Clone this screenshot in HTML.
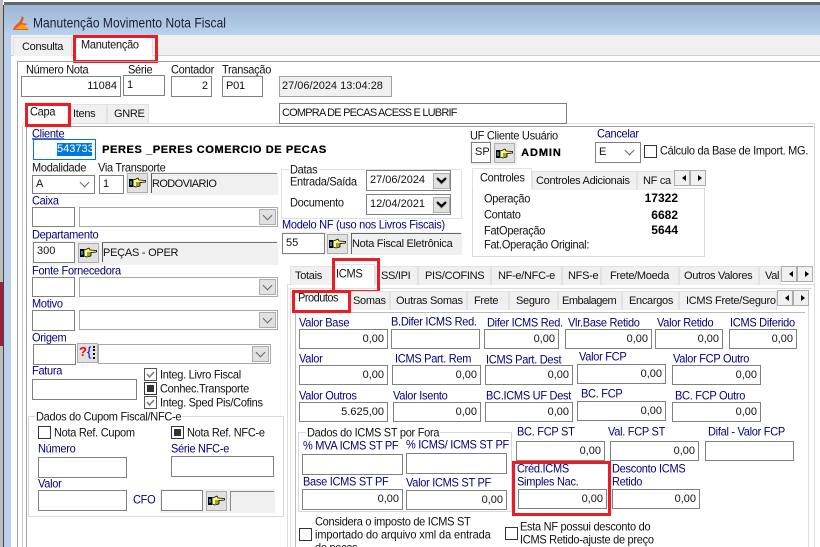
<!DOCTYPE html>
<html><head><meta charset="utf-8"><style>
html,body{margin:0;padding:0;background:#fff}
#p{position:relative;width:820px;height:547px;overflow:hidden;background:#fff;font:11px/13px "Liberation Sans",sans-serif;color:#111}
#p div,#p svg{position:absolute;box-sizing:border-box}
.l{white-space:nowrap;color:#000080;height:13px;letter-spacing:-.28px;transform:scaleY(1.12)}
.t{white-space:nowrap;color:#111;height:13px;letter-spacing:-.28px;transform:scaleY(1.12)}
.w{white-space:nowrap;font-weight:bold;color:#000;height:13px;letter-spacing:.6px;font-size:11px}
.b{border:1px solid #808080;background:#fff;white-space:nowrap;padding:0 3px;line-height:18px;height:21px;color:#111}
.v{text-align:right;line-height:19px;height:20px;border-color:#808080}
.g{background:#f0f0f0}
.c{border:1px solid #a8a8a8;background:#fff;width:199px;height:20px}
.a{background:#e1e1e1;border:1px solid #adadad;width:17px;height:16px}
.a::after{content:"";position:absolute;left:4px;top:2px;width:6px;height:6px;border:solid #666;border-width:0 1px 1px 0;transform:rotate(45deg)}
.tb{background:#f0f0f0;border:1px solid #e2e2e2;border-bottom:0;white-space:nowrap;overflow:hidden;color:#111;height:19px;letter-spacing:-.3px}
.n{background:#f0f0f0;border:1px solid #adadad;width:16px;height:16px}
.nl::after,.nr::after{content:"";position:absolute;top:4px;border:3px solid transparent;border-width:3px 4px}
.nl::after{left:3px;border-right-color:#000}
.nr::after{left:7px;border-left-color:#000}
.h{background:#e1e1e1;border:1px solid #adadad;width:21px;height:20px}
.k{width:13px;height:13px;border:1px solid #333;background:#fff}
.r{border:3px solid #ed1c24}
.x{background:#ccc}
</style></head><body><div id="p">
<svg width="0" height="0" style="left:0;top:0"><defs><symbol id="hand" viewBox="0 0 17 11"><rect x="0" y="2" width="4" height="8" fill="#000"/><rect x="1" y="4" width="2" height="4" fill="#0090b0"/><path d="M4 3 L7 2 L9 1 L10 3 L16.500 3.500 L16.500 5 L11 5.500 L11 9 L7 10 L4 9 Z" fill="#ffff70" stroke="#000" stroke-width=".8"/><path d="M7 6 H11 M7 8 H10.500" stroke="#000" stroke-width=".8"/></symbol></defs></svg>

<!-- window frame -->
<div style="left:0;top:0;width:3px;height:547px;background:#bdbdbd"></div>
<div style="left:0;top:282px;width:3px;height:64px;background:#9e1f3d"></div>
<div style="left:3px;top:5px;width:1px;height:542px;background:#444"></div>
<div style="left:4px;top:2px;width:816px;height:3px;background:#666"></div>
<div style="left:4px;top:5px;width:816px;height:30px;background:linear-gradient(#9bb6d5,#b9d1ea)"></div>
<div style="left:4px;top:35px;width:7px;height:512px;background:#b9d1ea"></div>
<svg style="left:13px;top:15px" width="17" height="16" viewBox="0 0 17 16"><path d="M9 1 L7 6 L1 12 L0 15 L16 15 L10 11 L15 9 L9 8 L11 3 Z" fill="#ea5a1f"/><path d="M2 14 L9 9 L16 14 Z" fill="#f7a21d"/></svg>
<div class="t" style="left:33px;top:17px;font-size:12px;color:#1c1c33;letter-spacing:.05px">Manutenção Movimento Nota Fiscal</div>

<!-- main tabs -->
<div style="left:11px;top:35px;width:809px;height:21px;background:#f0f0f0"></div>
<div class="x" style="left:11px;top:55px;width:809px;height:1px"></div>
<div class="tb" style="left:13px;top:37px;width:59px;padding:3px 8px">Consulta</div>
<div style="left:73px;top:35px;width:80px;height:22px;background:#fff;border:1px solid #e2e2e2;border-bottom:0"></div>
<div class="t" style="left:81px;top:39px">Manutenção</div>
<div class="r" style="left:73px;top:35px;width:85px;height:28px"></div>

<div style="left:17px;top:61px;width:803px;height:1px;background:#a0a0a0"></div>
<div style="left:17px;top:61px;width:1px;height:486px;background:#a0a0a0"></div>

<div class="t" style="left:26px;top:64px">Número Nota</div>
<div class="t" style="left:128px;top:64px">Série</div>
<div class="t" style="left:171px;top:64px">Contador</div>
<div class="t" style="left:222px;top:64px">Transação</div>
<div class="b v" style="left:21px;top:76px;width:100px;height:21px">11084</div>
<div class="b" style="left:123px;top:75px;width:42px;height:21px">1</div>
<div class="b v" style="left:171px;top:76px;width:41px;height:21px">2</div>
<div class="b" style="left:222px;top:76px;width:41px;height:21px;line-height:19px;letter-spacing:-.2px">P01</div>
<div class="b g" style="left:279px;top:76px;width:113px;height:21px;border-color:#a0a0a0;line-height:19px;padding:0 2px">27/06/2024 13:04:28</div>

<!-- capa tabs -->
<div class="x" style="left:22px;top:126px;width:1px;height:421px"></div>
<div style="left:26px;top:126px;width:1px;height:421px;background:#a0a0a0"></div>
<div style="left:27px;top:126px;width:786px;height:1px;background:#a0a0a0"></div>
<div style="left:22px;top:123px;width:792px;height:1px;background:#ddd"></div>
<div style="left:814px;top:123px;width:1px;height:424px;background:#ddd"></div>
<div style="left:26px;top:102px;width:42px;height:24px;background:#fff;border:1px solid #e2e2e2;border-bottom:0"></div>
<div class="t" style="left:30px;top:106px">Capa</div>
<div class="tb" style="left:68px;top:104px;width:39px;padding:3px 4px">Itens</div>
<div class="tb" style="left:107px;top:104px;width:42px;padding:3px 6px">GNRE</div>
<div class="r" style="left:25px;top:103px;width:46px;height:24px"></div>
<div class="b" style="left:279px;top:103px;width:288px;height:21px;line-height:19px;padding:0 2px;letter-spacing:-.8px">COMPRA DE PECAS ACESS E LUBRIF</div>

<!-- left column -->
<div class="l" style="left:32px;top:128px;text-decoration:underline">Cliente</div>
<div class="b" style="left:33px;top:139px;width:63px;height:21px;border-color:#0078d7"></div>
<div style="left:57px;top:143px;width:35px;height:13px;background:#0078d7;color:#fff;line-height:13px;overflow:hidden">543733</div>
<div class="w" style="left:102px;top:144px;text-shadow:.3px 0 0 #000">PERES _PERES COMERCIO DE PECAS</div>

<div class="t" style="left:32px;top:162px">Modalidade</div>
<div class="t" style="left:98px;top:162px">Via Transporte</div>
<div class="b" style="left:32px;top:175px;width:63px;height:19px;line-height:17px">A</div>
<div class="a" style="left:77px;top:177px;border:0;background:none"></div>
<div class="b" style="left:99px;top:175px;width:25px;height:19px;line-height:17px">1</div>
<div style="left:126px;top:172px;width:152px;height:23px;background:#f0f0f0"></div>
<div class="h" style="left:127px;top:173px"></div><svg style="left:129px;top:177px" width="17" height="11"><use href="#hand"/></svg>
<div style="left:151px;top:173px;width:126px;height:20px;background:#f0f0f0;border-left:1px solid #555;border-top:1px solid #888;line-height:20px;letter-spacing:-.6px">RODOVIARIO</div>

<div class="l" style="left:32px;top:195px">Caixa</div>
<div class="b" style="left:32px;top:207px;width:43px;height:20px"></div>
<div class="c" style="left:79px;top:207px"></div><div class="a" style="left:259px;top:209px"></div>

<div class="l" style="left:32px;top:229px">Departamento</div>
<div style="left:32px;top:241px;width:246px;height:24px;background:#f0f0f0"></div>
<div class="b" style="left:33px;top:242px;width:42px;height:21px;line-height:17px">300</div>
<div class="h" style="left:78px;top:243px"></div><svg style="left:80px;top:247px" width="17" height="11"><use href="#hand"/></svg>
<div style="left:102px;top:242px;width:175px;height:20px;background:#f0f0f0;border-left:1px solid #555;border-top:1px solid #777;line-height:20px;letter-spacing:-.25px">PEÇAS - OPER</div>

<div class="l" style="left:32px;top:265px">Fonte Fornecedora</div>
<div class="b" style="left:32px;top:277px;width:43px;height:20px"></div>
<div class="c" style="left:79px;top:277px"></div><div class="a" style="left:259px;top:279px"></div>

<div class="l" style="left:32px;top:298px">Motivo</div>
<div class="b" style="left:32px;top:310px;width:43px;height:21px"></div>
<div class="c" style="left:79px;top:310px"></div><div class="a" style="left:259px;top:312px"></div>

<div class="l" style="left:32px;top:332px">Origem</div>
<div class="b" style="left:33px;top:344px;width:43px;height:21px"></div>
<div class="h" style="left:77px;top:343px"></div>
<div style="left:79px;top:345px;width:8px;height:13px;color:#f00;font-weight:bold;font-size:13px">?</div>
<div style="left:87px;top:345px;width:6px;height:13px;color:#00c;font-size:13px">{</div>
<div style="left:93px;top:346px;width:2px;height:13px;border-left:2px dotted #000"></div>
<div class="c" style="left:98px;top:344px;width:173px"></div><div class="a" style="left:252px;top:346px"></div>

<div class="l" style="left:32px;top:365px">Fatura</div>
<div class="b" style="left:32px;top:379px;width:105px;height:21px"></div>
<div class="k" style="left:144px;top:368px;border-color:#555"></div><svg style="left:145px;top:369px" width="11" height="11"><path d="M2 5 L4.500 8 L9 3" fill="none" stroke="#777" stroke-width="1.500"/></svg>
<div class="t" style="left:160px;top:369px">Integ. Livro Fiscal</div>
<div class="k" style="left:144px;top:382px"></div><div style="left:147px;top:385px;width:7px;height:7px;background:#333"></div>
<div class="t" style="left:160px;top:383px">Conhec.Transporte</div>
<div class="k" style="left:144px;top:396px;border-color:#555"></div><svg style="left:145px;top:397px" width="11" height="11"><path d="M2 5 L4.500 8 L9 3" fill="none" stroke="#777" stroke-width="1.500"/></svg>
<div class="t" style="left:160px;top:397px">Integ. Sped Pis/Cofins</div>

<div style="left:28px;top:416px;width:256px;height:101px;border:1px solid #d9d9d9"></div>
<div class="t" style="left:35px;top:411px;background:#fff;padding:0 1px">Dados do Cupom Fiscal/NFC-e</div>
<div class="k" style="left:38px;top:426px"></div>
<div class="t" style="left:54px;top:427px">Nota Ref. Cupom</div>
<div class="k" style="left:171px;top:426px"></div><div style="left:174px;top:429px;width:7px;height:7px;background:#333"></div>
<div class="t" style="left:187px;top:427px">Nota Ref. NFC-e</div>
<div class="l" style="left:38px;top:443px">Número</div>
<div class="l" style="left:171px;top:443px">Série NFC-e</div>
<div class="b" style="left:38px;top:457px;width:89px;height:21px"></div>
<div class="b" style="left:171px;top:456px;width:103px;height:21px"></div>
<div class="l" style="left:38px;top:478px">Valor</div>
<div class="b" style="left:38px;top:490px;width:89px;height:21px"></div>
<div class="l" style="left:133px;top:494px">CFO</div>
<div style="left:160px;top:489px;width:115px;height:24px;background:#f0f0f0"></div>
<div class="b" style="left:161px;top:490px;width:42px;height:21px"></div>
<div class="h" style="left:206px;top:491px"></div><svg style="left:208px;top:495px" width="17" height="11"><use href="#hand"/></svg>
<div style="left:230px;top:491px;width:44px;height:20px;background:#f0f0f0;border-left:1px solid #888;border-top:1px solid #888"></div>

<!-- datas -->
<div style="left:281px;top:169px;width:181px;height:50px;border:1px solid #e0e0e0"></div>
<div class="t" style="left:289px;top:164px;background:#fff;padding:0 1px">Datas</div>
<div class="t" style="left:290px;top:176px">Entrada/Saída</div>
<div class="t" style="left:290px;top:197px">Documento</div>
<div class="b" style="left:366px;top:170px;width:85px;height:21px;line-height:19px">27/06/2024</div>
<div class="b" style="left:366px;top:194px;width:85px;height:21px;line-height:19px">12/04/2021</div>
<div class="a" style="left:433px;top:173px;height:16px"></div>
<div class="a" style="left:433px;top:197px;height:16px"></div>
<svg style="left:436px;top:177px" width="11" height="8" style="background:#e1e1e1"><path d="M1 1 L5.500 5 L10 1" fill="none" stroke="#000" stroke-width="2"/></svg>
<svg style="left:436px;top:201px" width="11" height="8"><path d="M1 1 L5.500 5 L10 1" fill="none" stroke="#000" stroke-width="2"/></svg>

<div class="l" style="left:282px;top:219px;color:#00008b">Modelo NF (uso nos Livros Fiscais)</div>
<div style="left:282px;top:232px;width:180px;height:23px;background:#f0f0f0"></div>
<div class="b" style="left:282px;top:233px;width:43px;height:21px;line-height:18px">55</div>
<div class="h" style="left:327px;top:234px"></div><svg style="left:329px;top:238px" width="17" height="11"><use href="#hand"/></svg>
<div style="left:351px;top:233px;width:110px;height:21px;background:#f0f0f0;border-left:1px solid #666;border-top:1px solid #666;line-height:21px;white-space:nowrap;letter-spacing:-.3px">Nota Fiscal Eletrônica</div>

<!-- UF -->
<div class="t" style="left:470px;top:130px">UF Cliente Usuário</div>
<div style="left:470px;top:141px;width:47px;height:24px;background:#f0f0f0"></div>
<div class="b" style="left:471px;top:142px;width:20px;height:21px;padding:0 3px;line-height:19px">SP</div>
<div class="h" style="left:494px;top:143px"></div><svg style="left:496px;top:148px" width="17" height="11"><use href="#hand"/></svg>
<div class="w" style="left:521px;top:147px;letter-spacing:.9px;text-shadow:.3px 0 0 #000">ADMIN</div>
<div class="l" style="left:597px;top:128px">Cancelar</div>
<div class="b" style="left:595px;top:142px;width:46px;height:21px;line-height:19px">E</div>
<div class="a" style="left:622px;top:145px;border:0;background:none"></div>
<div class="k" style="left:644px;top:145px"></div>
<div class="t" style="left:660px;top:145px">Cálculo da Base de Import. MG.</div>

<!-- controles -->
<div style="left:472px;top:188px;width:233px;height:69px;border:1px solid #d9d9d9"></div>
<div class="tb" style="left:532px;top:171px;width:105px;padding:3px 3px">Controles Adicionais</div>
<div class="tb" style="left:637px;top:171px;width:38px;padding:3px 5px;border-right:0">NF ca</div>
<div style="left:472px;top:168px;width:60px;height:21px;background:#fff;border:1px solid #e2e2e2;border-bottom:0"></div>
<div class="t" style="left:480px;top:172px">Controles</div>
<div class="n nl" style="left:674px;top:170px"></div><div class="n nr" style="left:690px;top:170px"></div>
<div class="t" style="left:484px;top:193px">Operação</div>
<div class="t" style="left:484px;top:209px">Contato</div>
<div class="t" style="left:484px;top:225px">FatOperação</div>
<div class="t" style="left:484px;top:239px">Fat.Operação Original:</div>
<div class="w" style="left:640px;top:192px;width:38px;text-align:right;letter-spacing:0;font-size:12px">17322</div>
<div class="w" style="left:640px;top:209px;width:38px;text-align:right;letter-spacing:0;font-size:12px">6682</div>
<div class="w" style="left:640px;top:224px;width:38px;text-align:right;letter-spacing:0;font-size:12px">5644</div>

<!-- totais tabs -->
<div style="left:287px;top:284px;width:1px;height:263px;background:#ddd"></div>
<div style="left:287px;top:284px;width:528px;height:1px;background:#ddd"></div>
<div style="left:290px;top:288px;width:1px;height:259px;background:#ddd"></div>
<div style="left:290px;top:288px;width:522px;height:1px;background:#ddd"></div>
<div style="left:295px;top:312px;width:1px;height:235px;background:#bbb"></div>
<div style="left:296px;top:312px;width:509px;height:1px;background:#bbb"></div>
<div style="left:808px;top:306px;width:1px;height:241px;background:#ddd"></div>
<div class="tb" style="left:290px;top:266px;width:43px;padding:3px 0 0 4px">Totais</div>
<div class="tb" style="left:375px;top:266px;width:43px;padding:3px 0 0 5px">SS/IPI</div>
<div class="tb" style="left:418px;top:266px;width:73px;padding:3px 0 0 6px">PIS/COFINS</div>
<div class="tb" style="left:491px;top:266px;width:71px;padding:3px 0 0 6px">NF-e/NFC-e</div>
<div class="tb" style="left:562px;top:266px;width:39px;padding:3px 0 0 5px">NFS-e</div>
<div class="tb" style="left:601px;top:266px;width:78px;padding:3px 0 0 8px">Frete/Moeda</div>
<div class="tb" style="left:679px;top:266px;width:80px;padding:3px 0 0 4px">Outros Valores</div>
<div class="tb" style="left:759px;top:266px;width:22px;padding:3px 0 0 5px">Val</div>
<div style="left:333px;top:264px;width:42px;height:22px;background:#fff;border:1px solid #e2e2e2;border-bottom:0"></div>
<div class="t" style="left:336px;top:268px">ICMS</div>
<div class="r" style="left:332px;top:258px;width:48px;height:35px"></div>
<div class="n nl" style="left:781px;top:266px"></div><div class="n nr" style="left:797px;top:266px"></div>

<div class="tb" style="left:349px;top:291px;width:41px;padding:3px 0 0 3px">Somas</div>
<div class="tb" style="left:390px;top:291px;width:77px;padding:3px 0 0 5px">Outras Somas</div>
<div class="tb" style="left:467px;top:291px;width:42px;padding:3px 0 0 6px">Frete</div>
<div class="tb" style="left:509px;top:291px;width:49px;padding:3px 0 0 6px">Seguro</div>
<div class="tb" style="left:558px;top:291px;width:64px;padding:3px 0 0 3px;letter-spacing:-.5px">Embalagem</div>
<div class="tb" style="left:622px;top:291px;width:57px;padding:3px 0 0 6px">Encargos</div>
<div class="tb" style="left:679px;top:291px;width:98px;padding:3px 0 0 6px">ICMS Frete/Seguro</div>
<div class="t" style="left:298px;top:292px;letter-spacing:-.5px">Produtos</div>
<div class="r" style="left:292px;top:290px;width:59px;height:23px"></div>
<div class="n nl" style="left:777px;top:290px"></div><div class="n nr" style="left:793px;top:290px"></div>

<!-- row 1 -->
<div class="l" style="left:299px;top:317px">Valor Base</div>
<div class="l" style="left:391px;top:316px">B.Difer ICMS Red.</div>
<div class="l" style="left:487px;top:317px">Difer ICMS Red.</div>
<div class="l" style="left:568px;top:317px">Vlr.Base Retido</div>
<div class="l" style="left:657px;top:317px">Valor Retido</div>
<div class="l" style="left:730px;top:317px">ICMS Diferido</div>
<div class="b v" style="left:299px;top:329px;width:89px">0,00</div>
<div class="b v" style="left:391px;top:329px;width:89px"></div>
<div class="b v" style="left:484px;top:329px;width:75px">0,00</div>
<div class="b v" style="left:565px;top:329px;width:87px">0,00</div>
<div class="b v" style="left:655px;top:329px;width:68px">0,00</div>
<div class="b v" style="left:729px;top:329px;width:68px">0,00</div>
<!-- row 2 -->
<div class="l" style="left:299px;top:353px">Valor</div>
<div class="l" style="left:395px;top:353px">ICMS Part. Rem</div>
<div class="l" style="left:486px;top:354px">ICMS Part. Dest</div>
<div class="l" style="left:579px;top:351px">Valor FCP</div>
<div class="l" style="left:673px;top:353px">Valor FCP Outro</div>
<div class="b v" style="left:299px;top:365px;width:89px">0,00</div>
<div class="b v" style="left:392px;top:365px;width:89px">0,00</div>
<div class="b v" style="left:485px;top:365px;width:88px">0,00</div>
<div class="b v" style="left:577px;top:364px;width:89px">0,00</div>
<div class="b v" style="left:672px;top:365px;width:89px">0,00</div>
<!-- row 3 -->
<div class="l" style="left:299px;top:390px">Valor Outros</div>
<div class="l" style="left:393px;top:390px">Valor Isento</div>
<div class="l" style="left:486px;top:390px">BC.ICMS UF Dest</div>
<div class="l" style="left:581px;top:388px">BC. FCP</div>
<div class="l" style="left:675px;top:390px">BC. FCP Outro</div>
<div class="b v" style="left:299px;top:402px;width:89px">5.625,00</div>
<div class="b v" style="left:393px;top:402px;width:88px">0,00</div>
<div class="b v" style="left:485px;top:402px;width:88px">0,00</div>
<div class="b v" style="left:577px;top:401px;width:89px">0,00</div>
<div class="b v" style="left:672px;top:402px;width:89px">0,00</div>
<!-- ST group -->
<div style="left:298px;top:432px;width:214px;height:80px;border:1px solid #d9d9d9"></div>
<div class="t" style="left:306px;top:427px;background:#fff;padding:0 1px">Dados do ICMS ST por Fora</div>
<div class="l" style="left:303px;top:440px">% MVA ICMS ST PF</div>
<div class="l" style="left:406px;top:439px">% ICMS/ ICMS ST PF</div>
<div class="b" style="left:302px;top:454px;width:101px"></div>
<div class="b" style="left:406px;top:453px;width:101px"></div>
<div class="l" style="left:303px;top:476px">Base ICMS ST PF</div>
<div class="l" style="left:406px;top:477px">Valor ICMS ST PF</div>
<div class="b v" style="left:302px;top:489px;width:101px;height:21px">0,00</div>
<div class="b v" style="left:406px;top:490px;width:101px">0,00</div>
<!-- right lower -->
<div class="l" style="left:517px;top:426px">BC. FCP ST</div>
<div class="l" style="left:608px;top:426px">Val. FCP ST</div>
<div class="l" style="left:708px;top:426px">Difal - Valor FCP</div>
<div class="b v" style="left:516px;top:441px;width:89px">0,00</div>
<div class="b v" style="left:610px;top:441px;width:89px">0,00</div>
<div class="b v" style="left:705px;top:441px;width:89px"></div>
<div class="l" style="left:517px;top:463px">Créd.ICMS</div>
<div class="l" style="left:517px;top:476px">Simples Nac.</div>
<div class="b v" style="left:518px;top:489px;width:89px">0,00</div>
<div class="l" style="left:612px;top:463px">Desconto ICMS</div>
<div class="l" style="left:612px;top:476px">Retido</div>
<div class="b v" style="left:612px;top:489px;width:88px">0,00</div>
<div class="r" style="left:512px;top:461px;width:99px;height:55px"></div>
<div class="k" style="left:299px;top:528px"></div>
<div class="t" style="left:315px;top:516px">Considera o imposto de ICMS ST</div>
<div class="t" style="left:315px;top:529px;letter-spacing:-.1px">importado do arquivo xml da entrada</div>
<div class="t" style="left:315px;top:542px">de peças</div>
<div class="k" style="left:505px;top:527px"></div>
<div class="t" style="left:520px;top:521px">Esta NF possui desconto do</div>
<div class="t" style="left:520px;top:534px">ICMS Retido-ajuste de preço</div>
</div></body></html>
